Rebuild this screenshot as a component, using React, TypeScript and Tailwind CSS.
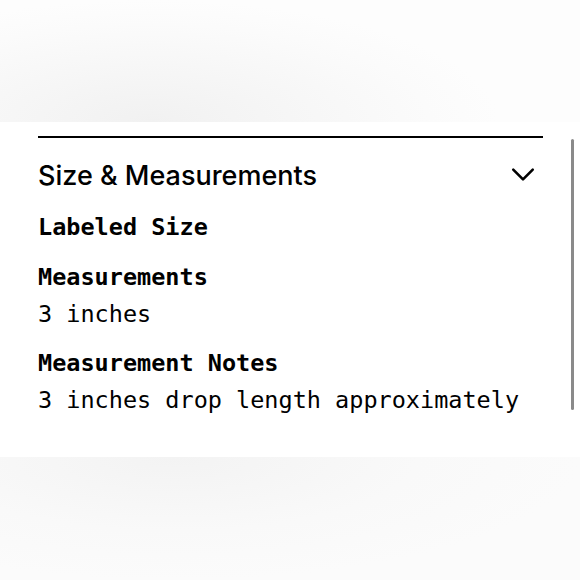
export default function App() {
  const mono = { fontFamily: '"DejaVu Sans Mono", "Liberation Mono", monospace' };
  return (
    <div className="w-[580px] h-[580px] flex flex-col bg-white overflow-hidden">
      <div className="h-[122px] bg-[radial-gradient(ellipse_60%_100%_at_26%_100%,#f1f1f1,#fbfbfb_80%,#fdfdfd)]" />
      <div className="relative h-[335px] bg-white px-[38px] pt-[14px]">
        <div className="w-[505px] h-[2px] bg-black" />
        <div className="flex items-center justify-between mt-[23px] h-[30px]">
          <h2 className="text-[27px] font-medium leading-[30px] text-black" style={{ fontFamily: 'Inter, "Liberation Sans", sans-serif' }}>
            Size &amp; Measurements
          </h2>
          <svg width="26" height="26" viewBox="0 0 24 24" fill="none" stroke="black" strokeWidth="2.4" strokeLinecap="round" strokeLinejoin="round" className="mr-[6px] -mt-[5px]">
            <path d="M3 8l9 9 9-9" />
          </svg>
        </div>
        <div className="mt-[19px] text-[23.5px] text-black" style={mono}>
          <div className="font-bold leading-[34px]">Labeled Size</div>
          <div className="font-bold leading-[34px] mt-[16px]">Measurements</div>
          <div className="leading-[34px] mt-[3px]">3 inches</div>
          <div className="font-bold leading-[34px] mt-[15px]">Measurement Notes</div>
          <div className="leading-[34px] mt-[3px]">3 inches drop length approximately</div>
        </div>
        <div className="absolute right-[6px] top-[17px] w-[3px] h-[271px] rounded-full bg-[#8a8a8a]" />
      </div>
      <div className="flex-1 bg-[radial-gradient(ellipse_70%_100%_at_30%_0%,#f3f3f3,#f9f9f9_60%,#fbfbfb)]" />
    </div>
  );
}
